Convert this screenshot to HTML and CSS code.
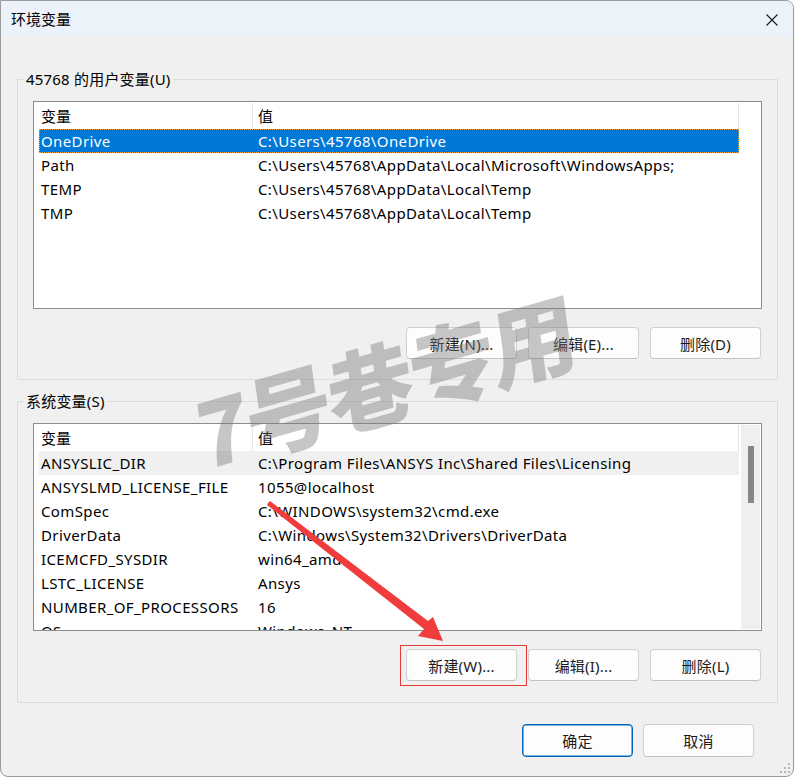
FILE: index.html
```html
<!DOCTYPE html>
<html lang="zh-CN">
<head>
<meta charset="utf-8">
<title>环境变量</title>
<link rel="stylesheet" href="styles.css">
</head>
<body>
<div class="window">
  <div class="titlebar">
    <span class="title">环境变量</span>
    <span class="close">
      <svg width="12" height="12" viewBox="0 0 12 12"><path d="M0.5 0.5 L11.5 11.5 M11.5 0.5 L0.5 11.5" stroke="#1a1a1a" stroke-width="1.1" fill="none"/></svg>
    </span>
  </div>
  <div class="content">
    <fieldset class="group g1">
      <legend>45768 的用户变量(U)</legend>
      <div class="list">
        <div class="main">
          <div class="header"><span class="h1">变量</span><span class="h2">值</span></div>
          <div class="row selected"><span class="c1">OneDrive</span><span class="c2">C:\Users\45768\OneDrive</span></div>
          <div class="row"><span class="c1">Path</span><span class="c2">C:\Users\45768\AppData\Local\Microsoft\WindowsApps;</span></div>
          <div class="row"><span class="c1">TEMP</span><span class="c2">C:\Users\45768\AppData\Local\Temp</span></div>
          <div class="row"><span class="c1">TMP</span><span class="c2">C:\Users\45768\AppData\Local\Temp</span></div>
        </div>
        <div class="side"></div>
      </div>
      <div class="buttons">
        <button class="btn">新建(N)...</button>
        <button class="btn">编辑(E)...</button>
        <button class="btn">删除(D)</button>
      </div>
    </fieldset>
    <fieldset class="group g2">
      <legend>系统变量(S)</legend>
      <div class="list">
        <div class="main">
          <div class="header"><span class="h1">变量</span><span class="h2">值</span></div>
          <div class="row hover"><span class="c1">ANSYSLIC_DIR</span><span class="c2">C:\Program Files\ANSYS Inc\Shared Files\Licensing</span></div>
          <div class="row"><span class="c1">ANSYSLMD_LICENSE_FILE</span><span class="c2">1055@localhost</span></div>
          <div class="row"><span class="c1">ComSpec</span><span class="c2">C:\WINDOWS\system32\cmd.exe</span></div>
          <div class="row"><span class="c1">DriverData</span><span class="c2">C:\Windows\System32\Drivers\DriverData</span></div>
          <div class="row"><span class="c1">ICEMCFD_SYSDIR</span><span class="c2">win64_amd</span></div>
          <div class="row"><span class="c1">LSTC_LICENSE</span><span class="c2">Ansys</span></div>
          <div class="row"><span class="c1">NUMBER_OF_PROCESSORS</span><span class="c2">16</span></div>
          <div class="row"><span class="c1">OS</span><span class="c2">Windows_NT</span></div>
        </div>
        <div class="side"><div class="scrollbar"><div class="thumb"></div></div></div>
      </div>
      <div class="buttons">
        <button class="btn">新建(W)...</button>
        <button class="btn">编辑(I)...</button>
        <button class="btn">删除(L)</button>
      </div>
    </fieldset>
    <div class="footer">
      <button class="btn primary">确定</button>
      <button class="btn">取消</button>
    </div>
  </div>
  <div class="watermark">7号巷专用</div>
  <svg class="annotations" width="794" height="777" viewBox="0 0 794 777">
    <rect x="400.5" y="645.5" width="126" height="40" fill="none" stroke="#e53935" stroke-width="1"/>
    <polygon points="268,503 270,501 428,621 433,617 443,641 418,636 424,629 267,505" fill="#f03c3c"/>
  </svg>
  <svg class="grip" width="14" height="14" viewBox="0 0 14 14">
    <g fill="#b8b8b8">
      <rect x="10" y="2" width="2" height="2"/>
      <rect x="6" y="6" width="2" height="2"/><rect x="10" y="6" width="2" height="2"/>
      <rect x="2" y="10" width="2" height="2"/><rect x="6" y="10" width="2" height="2"/><rect x="10" y="10" width="2" height="2"/>
    </g>
  </svg>
</div>
</body>
</html>
```

FILE: styles.css
```css
* { box-sizing: border-box; }
html, body { margin: 0; padding: 0; background: #ffffff; }
body {
  font-family: "Noto Sans", "Noto Sans CJK SC", sans-serif;
  font-size: 15px;
  color: #000;
}
.window {
  position: relative;
  width: 794px;
  height: 777px;
  border: 1px solid #9a9a9a;
  border-radius: 0 8px 8px 8px;
  background: #f0f0f0;
  overflow: hidden;
}
.titlebar {
  height: 36px;
  background: #ebf2f9;
  display: flex;
  align-items: center;
  justify-content: space-between;
  padding: 0 15px 0 10px;
}
.title { font-size: 15px; line-height: 20px; color: #000; }
.close { display: flex; width: 12px; height: 12px; margin-top: 1px; }
.content {
  padding: 32px 15px 0 16px;
}
.group {
  margin: 0;
  border: 1px solid #dcdcdc;
  padding: 12px 15px 20px 15px;
  min-width: 0;
}
.group legend {
  font-size: 15px;
  line-height: 20px;
  padding: 0 2px;
  margin-left: -9px;
  color: #000;
  letter-spacing: 0.2px;
}
.g2 { margin-top: 11px; padding-bottom: 21px; }
.list {
  height: 208px;
  border: 1px solid #8b8d91;
  background: #fff;
  display: flex;
  overflow: hidden;
}
.main { width: 705px; flex: none; }
.side { flex: 1; display: flex; padding: 1px 1px 1px 1px; }
.scrollbar {
  flex: 1;
  margin-left: 1px;
  background: #efefef;
  position: relative;
}
.thumb {
  margin: 21px auto 0;
  width: 6px;
  height: 57px;
  background: #868686;
}
.header {
  display: flex;
  height: 27px;
  line-height: 27px;
}
.h1 {
  width: 219px;
  padding-left: 7px;
  border-right: 1px solid #e5e5e5;
  margin-top: 1px;
}
.h2 {
  width: 486px;
  padding-left: 5px;
  border-right: 1px solid #e5e5e5;
  margin-top: 1px;
}
.row {
  display: flex;
  margin-left: 5px;
  width: 700px;
  height: 24px;
  line-height: 24px;
  white-space: nowrap;
  letter-spacing: 0.38px;
}
.c1 { width: 217px; padding-left: 2px; flex: none; }
.c2 { padding-left: 2px; }
.row.selected {
  background: #0078d7;
  color: #fff;
  outline: 1px dotted #f6a23e;
  outline-offset: -1px;
}
.row.hover { background: #f0f0f0; }
.buttons {
  display: flex;
  justify-content: flex-end;
  gap: 11px;
  margin-top: 18px;
  margin-right: 1px;
}
.btn {
  width: 111px;
  height: 32px;
  border: 1px solid #d0d0d0;
  border-bottom-color: #c2c2c2;
  border-radius: 4px;
  background: #fdfdfd;
  font-family: "Noto Sans", "Noto Sans CJK SC", sans-serif;
  font-size: 15px;
  color: #1b1b1b;
  padding: 0;
  letter-spacing: 0.2px;
}
.footer {
  display: flex;
  justify-content: flex-end;
  gap: 10px;
  margin-top: 21px;
  margin-right: 24px;
}
.footer .btn { height: 33px; }
.btn.primary {
  border: 1px solid #0067c0;
  box-shadow: inset 0 0 0 0.5px #0067c0;
}
.watermark {
  position: absolute;
  left: 196px;
  top: 388px;
  font-family: "Noto Sans CJK SC", sans-serif;
  font-weight: 900;
  font-size: 88px;
  line-height: 1;
  color: rgba(120, 120, 120, 0.42);
  transform: rotate(-16deg) skewX(-8deg);
  transform-origin: left center;
  white-space: nowrap;
  pointer-events: none;
  letter-spacing: -3px;
}
.annotations {
  position: absolute;
  left: -1px;
  top: -1px;
  pointer-events: none;
}
.grip {
  position: absolute;
  right: 1px;
  bottom: 1px;
}
```
